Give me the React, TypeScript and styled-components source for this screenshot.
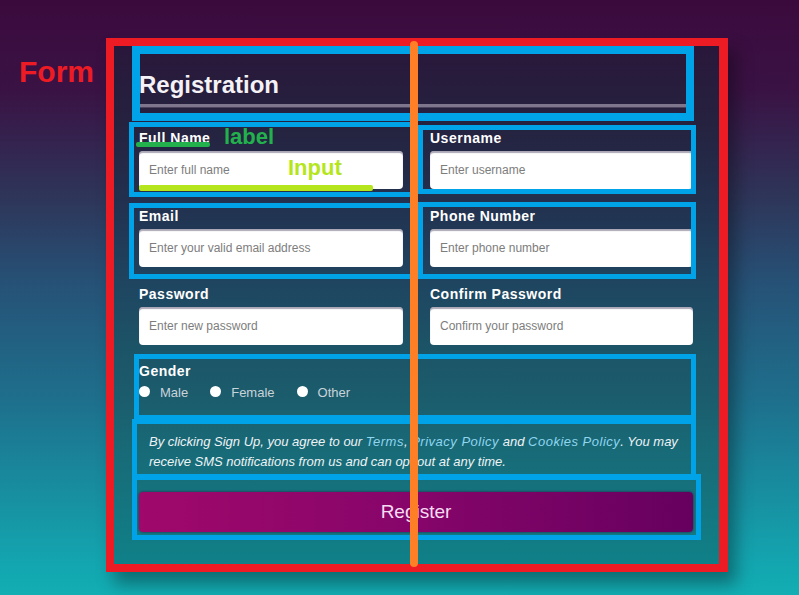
import React from "react";
import styled, { createGlobalStyle } from "styled-components";

const Global = createGlobalStyle`
  html, body { margin: 0; padding: 0; }
  body {
    width: 799px;
    height: 595px;
    overflow: hidden;
    font-family: "Liberation Sans", Arial, sans-serif;
    background: linear-gradient(180deg, #3b0a3d 0%, #3a1244 15%, #2e3559 33%, #265277 48%, #1e6f8c 67%, #13a6b0 95%, #12aeb3 100%);
  }
`;

const Page = styled.div`
  position: relative;
  box-sizing: border-box;
  width: 799px;
  height: 595px;
  padding: 38px 0 0 106px;
`;

const Card = styled.form`
  position: relative;
  box-sizing: border-box;
  width: 622px;
  padding: 33px 35px 40px 33px;
  background: linear-gradient(
    180deg,
    #2a163a 0%,
    #25223f 16%,
    #22304e 30%,
    #1f4460 45%,
    #1c5467 58%,
    #1b5d6d 68%,
    #186a77 77%,
    #0f8289 100%
  );
  box-shadow: 8px 12px 16px rgba(0, 0, 0, 0.35);
`;

const Header = styled.div`
  padding-bottom: 5px;
  border-bottom: 3px solid #7d768c;
  box-shadow: 0 1px 0 #4b445c;
`;

const Title = styled.h2`
  margin: 0;
  font-size: 24px;
  line-height: 28px;
  font-weight: 700;
  color: #f4f2f6;
`;

const Grid = styled.div`
  display: grid;
  grid-template-columns: 264px 263px;
  column-gap: 27px;
  row-gap: 19px;
  margin-top: 23px;
`;

const Field = styled.div`
  display: flex;
  flex-direction: column;
`;

const Label = styled.label`
  font-size: 14px;
  font-weight: 700;
  letter-spacing: 0.5px;
  line-height: 16px;
  color: #ffffff;
  margin-bottom: 5px;
`;

const Input = styled.input`
  box-sizing: border-box;
  height: 38px;
  width: 100%;
  border: none;
  border-radius: 4px;
  padding: 0 10px;
  font-family: "Liberation Sans", Arial, sans-serif;
  font-size: 12px;
  color: #333;
  background: #ffffff;
  box-shadow: inset 0 2px 1px rgba(90, 80, 110, 0.5);
  outline: none;
  &::placeholder { color: #7d7d7d; }
`;

const GenderGroup = styled.div`
  display: flex;
  flex-direction: column;
  margin-top: 18px;
`;

const GenderTitle = styled.span`
  font-size: 14px;
  font-weight: 700;
  letter-spacing: 0.5px;
  line-height: 16px;
  color: #ffffff;
`;

const RadioRow = styled.div`
  display: flex;
  align-items: center;
  gap: 22px;
  height: 18px;
  margin-top: 5px;
`;

const RadioOption = styled.label`
  display: flex;
  align-items: center;
  gap: 10px;
  font-size: 13px;
  line-height: 18px;
  color: #c9d3da;
`;

const RadioDot = styled.input`
  appearance: none;
  -webkit-appearance: none;
  margin: 0;
  width: 11px;
  height: 11px;
  border-radius: 50%;
  background: #ffffff;
  position: relative;
  top: -2px;
`;

const Terms = styled.p`
  margin: 20px 0 0;
  padding: 10px 10px;
  font-size: 13px;
  font-style: italic;
  line-height: 20px;
  color: #eef3f5;
  white-space: nowrap;
`;

const TermsLink = styled.a`
  color: #8fd6f0;
  text-decoration: none;
  letter-spacing: 0.5px;
`;

const SubmitButton = styled.button`
  display: block;
  width: 100%;
  height: 40px;
  margin-top: 10px;
  border: none;
  border-radius: 4px;
  background: linear-gradient(90deg, #a0086b 0%, #86056a 50%, #66005f 100%);
  color: #f6dcf2;
  font-family: "Liberation Sans", Arial, sans-serif;
  font-size: 19px;
  box-shadow: 0 0 2px 1px rgba(50, 0, 50, 0.35);
`;

/* ---- annotation overlays drawn over the form (free-canvas markup) ---- */

const AnnoFrame = styled.div<{ $x: number; $y: number; $w: number; $h: number; $bw: number }>`
  position: absolute;
  box-sizing: border-box;
  left: ${(p) => p.$x}px;
  top: ${(p) => p.$y}px;
  width: ${(p) => p.$w}px;
  height: ${(p) => p.$h}px;
  border: ${(p) => p.$bw}px solid #00a2e8;
  pointer-events: none;
`;

const FormFrame = styled.div`
  position: absolute;
  inset: 0;
  border: 8px solid #ed1c24;
  border-right-width: 9px;
  pointer-events: none;
`;

const Underline = styled.div<{ $x: number; $y: number; $w: number; $h: number; $c: string }>`
  position: absolute;
  left: ${(p) => p.$x}px;
  top: ${(p) => p.$y}px;
  width: ${(p) => p.$w}px;
  height: ${(p) => p.$h}px;
  background: ${(p) => p.$c};
  border-radius: 2px;
  pointer-events: none;
`;

const CenterLine = styled.div`
  position: absolute;
  left: 304px;
  top: 3px;
  width: 8px;
  height: 526px;
  border-radius: 4px;
  background: #ff7f27;
  pointer-events: none;
`;

const AnnoText = styled.span<{ $x: number; $y: number; $c: string; $size: number }>`
  position: absolute;
  left: ${(p) => p.$x}px;
  top: ${(p) => p.$y}px;
  font-family: "Liberation Sans", Arial, sans-serif;
  font-weight: 700;
  font-size: ${(p) => p.$size}px;
  line-height: 1;
  color: ${(p) => p.$c};
  pointer-events: none;
  white-space: nowrap;
`;

const fields = [
  { id: "fullname", label: "Full Name", ph: "Enter full name", type: "text" },
  { id: "username", label: "Username", ph: "Enter username", type: "text" },
  { id: "email", label: "Email", ph: "Enter your valid email address", type: "email" },
  { id: "phone", label: "Phone Number", ph: "Enter phone number", type: "tel" },
  { id: "password", label: "Password", ph: "Enter new password", type: "password" },
  { id: "confirm", label: "Confirm Password", ph: "Confirm your password", type: "password" },
];

const blueBoxes = [
  { x: 26, y: 8, w: 562, h: 75, bw: 8 },
  { x: 23, y: 84, w: 287, h: 75, bw: 5 },
  { x: 312, y: 87, w: 278, h: 69, bw: 5 },
  { x: 23, y: 165, w: 286, h: 76, bw: 5 },
  { x: 312, y: 164, w: 278, h: 77, bw: 5 },
  { x: 28, y: 316, w: 562, h: 66, bw: 5 },
  { x: 26, y: 381, w: 564, h: 61, bw: 5 },
  { x: 26, y: 436, w: 569, h: 66, bw: 5 },
];

export default function App() {
  return (
    <>
      <Global />
      <Page>
        <AnnoText $x={19} $y={57} $c="#ed1c24" $size={30}>
          Form
        </AnnoText>
        <Card onSubmit={(e) => e.preventDefault()}>
          <Header>
            <Title>Registration</Title>
          </Header>
          <Grid>
            {fields.map((f) => (
              <Field key={f.id}>
                <Label htmlFor={f.id}>{f.label}</Label>
                <Input id={f.id} type={f.type} placeholder={f.ph} />
              </Field>
            ))}
          </Grid>
          <GenderGroup>
            <GenderTitle>Gender</GenderTitle>
            <RadioRow>
              {["Male", "Female", "Other"].map((g) => (
                <RadioOption key={g}>
                  <RadioDot type="radio" name="gender" />
                  {g}
                </RadioOption>
              ))}
            </RadioRow>
          </GenderGroup>
          <Terms>
            By clicking Sign Up, you agree to our <TermsLink href="#">Terms</TermsLink>,{" "}
            <TermsLink href="#">Privacy Policy</TermsLink> and{" "}
            <TermsLink href="#">Cookies Policy</TermsLink>. You may
            <br />
            receive SMS notifications from us and can opt out at any time.
          </Terms>
          <SubmitButton type="submit">Register</SubmitButton>

          {blueBoxes.map((b, i) => (
            <AnnoFrame key={i} $x={b.x} $y={b.y} $w={b.w} $h={b.h} $bw={b.bw} />
          ))}
          <FormFrame />
          <Underline $x={30} $y={104} $w={74} $h={5} $c="#22b14c" />
          <Underline $x={33} $y={147} $w={234} $h={6} $c="#b5e61d" />
          <AnnoText $x={118} $y={88} $c="#22b14c" $size={22}>
            label
          </AnnoText>
          <AnnoText $x={182} $y={119} $c="#b5e61d" $size={22}>
            Input
          </AnnoText>
          <CenterLine />
        </Card>
      </Page>
    </>
  );
}
